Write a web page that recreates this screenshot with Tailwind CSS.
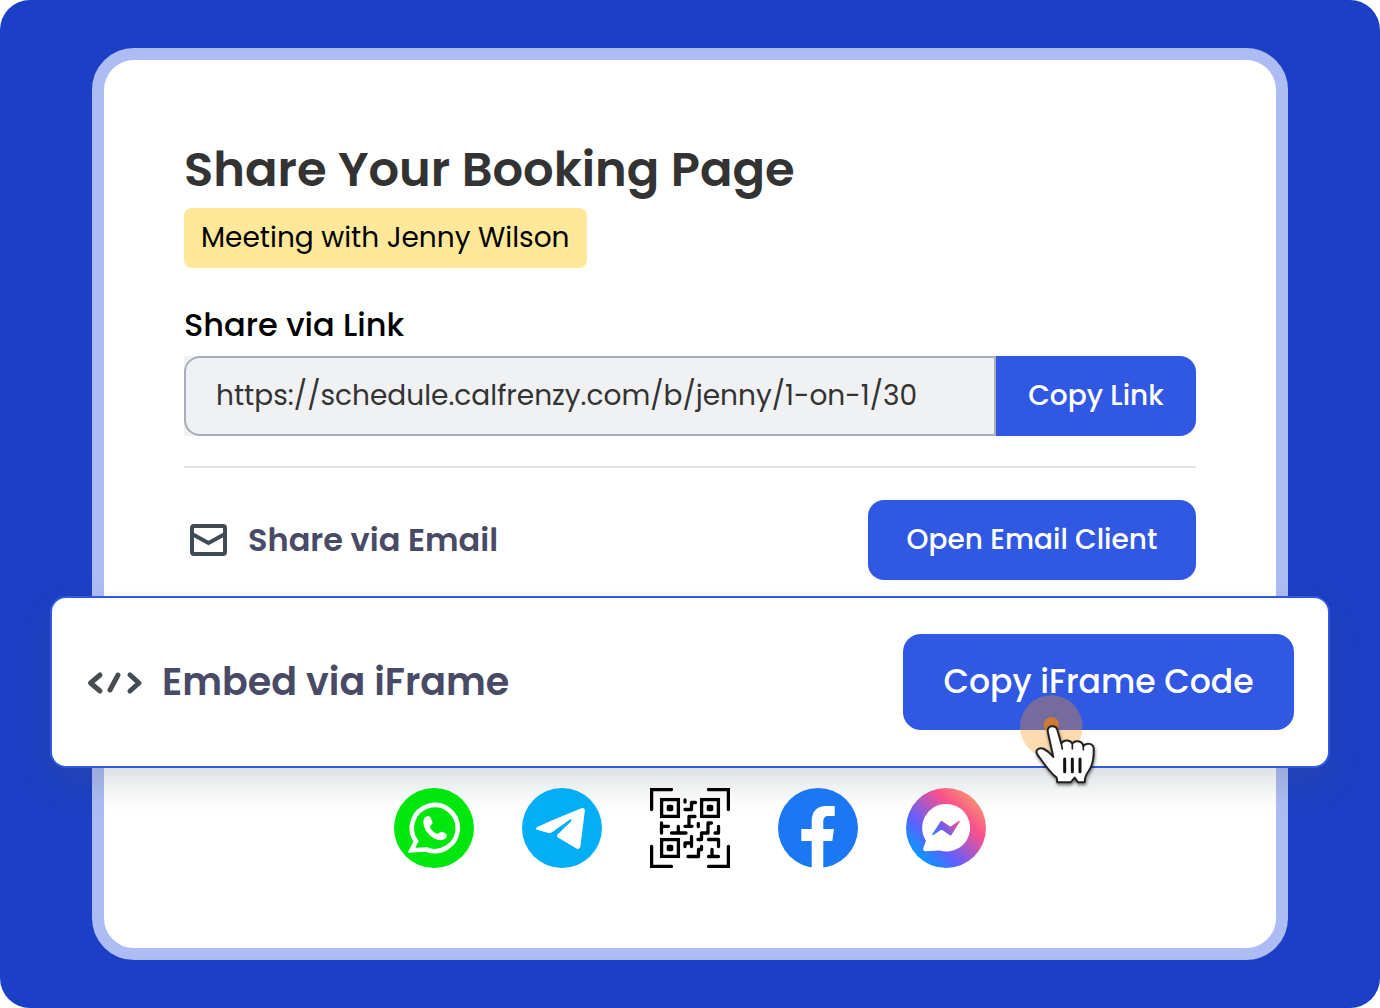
<!DOCTYPE html>
<html lang="en">
<head>
  <meta charset="UTF-8" />
  <meta name="viewport" content="width=device-width, initial-scale=1.0" />
  <title>Share Your Booking Page</title>
  <script src="https://cdn.jsdelivr.net/npm/@tailwindcss/browser@4"></script>
</head>
<body class="bg-white font-['Poppins','Inter',sans-serif]">
  <div class="min-h-screen flex flex-col rounded-[30px] bg-[#1c3fc5] px-[92px] py-12 overflow-hidden">
    <main class="flex-1 rounded-[42px] border-12 border-[#aebcf4] bg-white p-20">

      <h1 class="text-5xl leading-[60px] font-semibold text-[#333333]">Share Your Booking Page</h1>
      <p class="mt-2 w-fit rounded-lg bg-[#ffe899] px-[17px] text-[28px] leading-[60px] text-black">Meeting with Jenny Wilson</p>

      <!-- Link -->
      <label for="link" class="block mt-9 text-[32px] leading-[42px] font-medium text-black">Share via Link</label>
      <div class="mt-[10px] flex h-20">
        <div class="flex-1 bg-[#f0f1f3]">
          <input id="link" type="text" readonly value="https://schedule.calfrenzy.com/b/jenny/1-on-1/30" class="w-full h-full rounded-l-2xl border-2 border-[#a9afb8] px-[30px] text-[28px] text-[#333333] outline-none" />
        </div>
        <button id="copyLink" class="w-[200px] rounded-r-2xl bg-[#3058e3] text-[28px] font-medium text-white">Copy Link</button>
      </div>

      <hr class="mt-[30px] border-t-2 border-[#e4e4e5]" />

      <!-- Email -->
      <section class="mt-8 flex items-center justify-between">
        <div class="flex items-center gap-4">
          <svg class="w-12 h-12" viewBox="0 0 48 48" fill="none" stroke="#414b55" stroke-width="4" stroke-linejoin="round">
            <rect x="8" y="10" width="33" height="28" rx="2" />
            <path d="M8 18L24.500 27L41 18" stroke-linejoin="miter" />
          </svg>
          <h2 class="text-[32px] leading-10 font-semibold text-[#484a66]">Share via Email</h2>
        </div>
        <button class="w-[328px] h-20 rounded-2xl bg-[#3058e3] text-[28px] font-medium text-white">Open Email Client</button>
      </section>

      <!-- iFrame, wider than the card -->
      <section class="relative -mx-[134px] mt-4 h-[172px] flex items-center justify-between rounded-2xl border-2 border-[#3058e3] bg-white px-[34px] shadow-[0_16px_32px_rgba(70,88,100,0.2)]">
        <div class="flex items-center gap-4">
          <svg class="w-15 h-12" viewBox="0 0 60 48" fill="none" stroke="#4a4d50" stroke-width="5" stroke-linecap="round" stroke-linejoin="round">
            <path d="M14 17L4.500 25L14 33M32 17L24 32" />
            <path d="M44 17L53 25L44 33" stroke="#414b55" />
          </svg>
          <h2 class="text-[38px] leading-12 font-semibold text-[#484a66]">Embed via iFrame</h2>
        </div>
        <button id="copyFrame" class="relative w-[391px] h-24 rounded-[18px] bg-[#3058e3] text-[33px] font-medium text-white">
          Copy iFrame Code
          <svg class="absolute left-[97px] top-[46px] w-[120px] h-[120px] pointer-events-none" viewBox="0 0 360 360">
            <circle cx="154" cy="140" r="94" fill="#fb9416" fill-opacity="0.34" />
            <circle cx="154" cy="134" r="23" fill="#c97c38" />
            <g class="drop-shadow-[2px_6px_4px_rgba(0,0,0,0.5)]">
              <path d="M143 154C141 135 168 134 172 150L184 191C190 177 211 179 217 191C223 180 246 181 250 198C259 187 281 189 281 207C282 233 280 253 266 273C258 283 254 291 254 307L234 307L224 293L212 307L172 307L170 293C150 279 136 257 112 223C104 210 118 201 132 207C144 213 152 221 160 231Z" fill="#fff" stroke="#222" stroke-width="6" stroke-linejoin="round" />
            </g>
            <path d="M184 191L187 207M217 191V207M250 198V209" stroke="#222" stroke-width="5" stroke-linecap="round" />
            <path d="M194 237V275M217 237V275M240 237V275" stroke="#111" stroke-width="9" stroke-linecap="round" />
          </svg>
        </button>
      </section>

      <!-- Social -->
      <nav class="relative mt-5 flex justify-center gap-12">
        <a href="#" aria-label="WhatsApp">
          <svg class="w-20 h-20" viewBox="0 0 80 80">
            <circle cx="40" cy="40" r="40" fill="#00e60f" />
            <path d="M22 53.300A23 23 0 1 1 32.500 61.500L17.500 62.200Z" fill="none" stroke="#fff" stroke-width="4.600" />
            <path d="M29.500 33C29.500 29.500 32 28 34.500 28.200C36 28.300 36.500 29 37 30.500L38.500 34.500C39 36 36 37.500 35.800 38.800C36.500 41.500 41 45.500 43.500 46C45 45.800 46 43.500 48 43.800C49.500 44.500 52.500 45.500 52.800 47C53 50.500 49 52.300 46 52.200C37 51.500 28.500 41 29.500 33Z" fill="#fff" />
          </svg>
        </a>
        <a href="#" aria-label="Telegram">
          <svg class="w-20 h-20" viewBox="0 0 80 80">
            <circle cx="40" cy="40" r="40" fill="#03aef4" />
            <path d="M15 39.300C30 32 45 26 59.500 20.200C62 19.500 63 21 62.800 23L58.500 58C58 61 56 61.500 54 60.300L36 49.500C34.500 48.500 34.800 47 36 46L49 33.500C50 32 49.500 30.800 48 31.500L31 43.500C28.500 45.300 27 45.300 24.500 44.500L15 41.700C13.700 41.200 13.600 40 15 39.300Z" fill="#fff" />
          </svg>
        </a>
        <a href="#" aria-label="QR code">
          <svg class="w-20 h-20" viewBox="0 0 80 80" fill="none" stroke="#000" stroke-width="3.300" stroke-linecap="round" stroke-linejoin="round">
            <path d="M1.600 21.500V1.600H21.500M58.500 1.600H78.400V21.500M78.400 58.500V78.400H58.500M21.500 78.400H1.600V58.500" stroke-linejoin="miter" />
            <g stroke-linejoin="miter">
              <rect x="11.600" y="11.600" width="16.800" height="16.800" />
              <rect x="51.600" y="11.600" width="16.800" height="16.800" />
              <rect x="11.600" y="51.600" width="16.800" height="16.800" />
            </g>
            <g fill="#000" stroke="none">
              <rect x="16.700" y="16.700" width="6.600" height="6.600" rx="2" />
              <rect x="56.700" y="16.700" width="6.600" height="6.600" rx="2" />
              <rect x="16.700" y="56.700" width="6.600" height="6.600" rx="2" />
            </g>
            <path d="M35 12V14M45.500 14.500H41.500V21.500H35M45 28.500H39V38M35 38.300H42M11.500 35V45M11.500 38.300H18.500M21.500 45H36M28.300 45V38.500M48.300 35.300V38.500M61.500 35H58V45H51.500V51.500H48M68.500 38.500V45H65M41.500 48.500V58.500M35 58.500V55H41.500M58.500 51.500H68.500V58.500M51.500 58.500V61.500H48.500V68.500H38M58.500 68.500H68.500M62 68.500V61.500" />
          </svg>
        </a>
        <a href="#" aria-label="Facebook">
          <svg class="w-20 h-20" viewBox="0 0 80 80">
            <circle cx="40" cy="40" r="40" fill="#1b77f2" />
            <path d="M56.700 18V28H50.500C47 28 45.300 30 45.300 33.500V41H56L54.300 53H45.300V80H33.700V53H23.300V41H33.700V33C33.700 23.500 39 18 48 18Z" fill="#fff" />
          </svg>
        </a>
        <a href="#" aria-label="Messenger">
          <svg class="w-20 h-20" viewBox="0 0 80 80">
            <defs>
              <linearGradient id="msg" x1="12" y1="68" x2="68" y2="12" gradientUnits="userSpaceOnUse">
                <stop offset="0" stop-color="#0a97ff" />
                <stop offset="0.280" stop-color="#5f5fff" />
                <stop offset="0.750" stop-color="#fa508c" />
                <stop offset="1" stop-color="#f78a75" />
              </linearGradient>
              <linearGradient id="bolt" x1="28" y1="48" x2="52" y2="32" gradientUnits="userSpaceOnUse">
                <stop offset="0" stop-color="#2a84ff" />
                <stop offset="0.450" stop-color="#7a5ae8" />
                <stop offset="1" stop-color="#fa5a80" />
              </linearGradient>
            </defs>
            <circle cx="40" cy="40" r="40" fill="url(#msg)" />
            <path d="M40 16A23.800 23.800 0 1 1 33.500 62.600L19.500 63.200C17.500 63.200 16.700 61.800 17.300 60L20 52.800A23.800 23.800 0 0 1 40 16Z" fill="#fff" />
            <path d="M27 46.500L35.500 33.500L44.500 39.500L53 33.500L44.700 46.800L35.500 40.700Z" fill="url(#bolt)" stroke="url(#bolt)" stroke-width="1.500" stroke-linejoin="round" />
          </svg>
        </a>
      </nav>
    </main>
  </div>

  <script>
    const link = document.getElementById('link');

    document.getElementById('copyLink').addEventListener('click', () => {
      link.select();
      navigator.clipboard.writeText(link.value);
    });

    document.getElementById('copyFrame').addEventListener('click', () => {
      navigator.clipboard.writeText(`<iframe src="${link.value}"></iframe>`);
    });
  </script>
</body>
</html>
